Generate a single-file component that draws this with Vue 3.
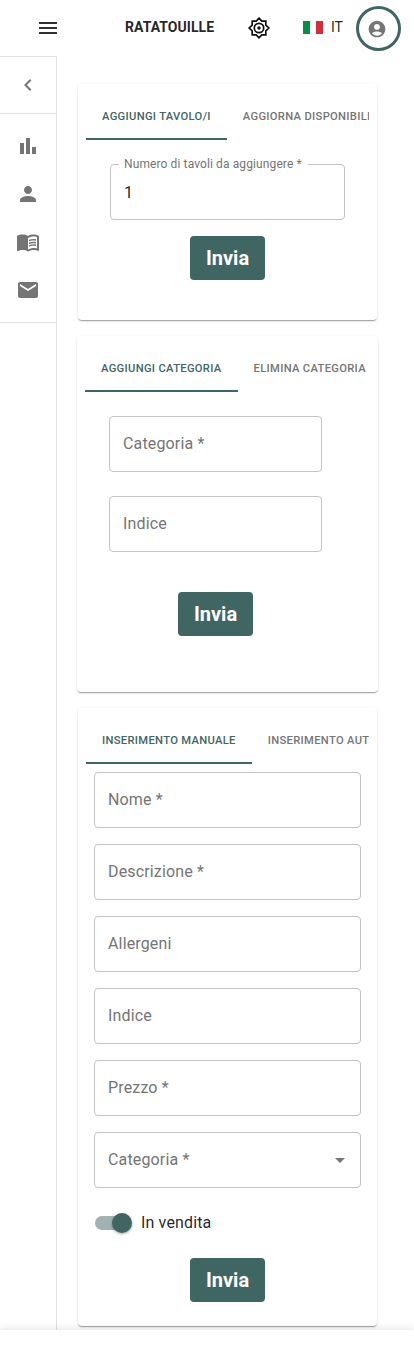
<script setup>
const navIcons = [
  'M4 9h4v11H4zm12 4h4v7h-4zm-6-9h4v16h-4z',
  'M12 12c2.21 0 4-1.79 4-4s-1.79-4-4-4-4 1.79-4 4 1.79 4 4 4zm0 2c-2.67 0-8 1.34-8 4v2h16v-2c0-2.66-5.33-4-8-4z',
  'M21 5c-1.11-.35-2.33-.5-3.5-.5-1.95 0-4.05.4-5.5 1.5-1.45-1.1-3.55-1.5-5.5-1.5S2.45 4.9 1 6v14.65c0 .25.25.5.5.5.1 0 .15-.05.25-.05C3.1 20.45 5.05 20 6.5 20c1.95 0 4.05.4 5.5 1.5 1.35-.85 3.8-1.5 5.5-1.5 1.65 0 3.35.3 4.75 1.05.1.05.15.05.25.05.25 0 .5-.25.5-.5V6c-.6-.45-1.25-.75-2-1zm0 13.5c-1.1-.35-2.3-.5-3.5-.5-1.7 0-4.15.65-5.5 1.5V8c1.35-.85 3.8-1.5 5.5-1.5 1.2 0 2.4.15 3.5.5v11.5z M17.5 10.5c.88 0 1.73.09 2.5.26V9.24c-.79-.15-1.64-.24-2.5-.24-1.7 0-3.24.29-4.5.83v1.66c1.13-.64 2.7-.99 4.5-.99zM13 12.49v1.66c1.13-.64 2.7-.99 4.5-.99.88 0 1.73.09 2.5.26V11.9c-.79-.15-1.64-.24-2.5-.24-1.7 0-3.24.3-4.5.83zm4.5 1.84c-1.7 0-3.24.29-4.5.83v1.66c1.13-.64 2.7-.99 4.5-.99.88 0 1.73.09 2.5.26v-1.52c-.79-.16-1.64-.24-2.5-.24z',
  'M20 4H4c-1.1 0-1.99.9-1.99 2L2 18c0 1.1.9 2 2 2h16c1.1 0 2-.9 2-2V6c0-1.1-.9-2-2-2zm0 4-8 5-8-5V6l8 5 8-5v2z'
]
const dishFields = ['Nome *', 'Descrizione *', 'Allergeni', 'Indice', 'Prezzo *']
</script>

<template>
  <div class="app">
    <header>
      <svg class="icon burger" viewBox="0 0 24 24"><path d="M3 18h18v-2H3v2zm0-5h18v-2H3v2zm0-7v2h18V6H3z" /></svg>
      <strong>RATATOUILLE</strong>
      <svg class="sun" viewBox="0 0 24 24">
        <path d="M12 2.2 14.8 5.2 18.8 5.2 18.8 9.2 21.8 12 18.8 14.8 18.8 18.8 14.8 18.8 12 21.8 9.2 18.8 5.2 18.8 5.2 14.8 2.2 12 5.2 9.2 5.2 5.2 9.2 5.2z" />
        <circle cx="12" cy="12" r="4.7" />
        <circle class="dot" cx="12" cy="12" r="1.7" />
      </svg>
      <div class="flag"><i class="green"></i><i class="red"></i></div>
      <span class="lang">IT</span>
      <div class="avatar">
        <svg viewBox="0 0 24 24"><path d="M12 2C6.48 2 2 6.48 2 12s4.48 10 10 10 10-4.48 10-10S17.52 2 12 2zm0 4c1.93 0 3.5 1.57 3.5 3.5S13.93 13 12 13s-3.5-1.57-3.5-3.5S10.07 6 12 6zm0 14c-2.03 0-4.43-.82-6.14-2.88C7.55 15.8 9.68 15 12 15s4.45.8 6.14 2.12C16.43 19.18 14.03 20 12 20z" /></svg>
      </div>
    </header>
    <div class="body">
      <aside>
        <div class="collapse"><svg class="icon" viewBox="0 0 24 24"><path d="M15.41 7.41 14 6l-6 6 6 6 1.41-1.41L10.83 12z" /></svg></div>
        <nav>
          <a v-for="(d, i) in navIcons" :key="i"><svg class="icon" viewBox="0 0 24 24"><path :d="d" /></svg></a>
        </nav>
      </aside>
      <main>
        <section class="card tables">
          <div class="tabs"><span class="tab on">AGGIUNGI TAVOLO/I</span><span class="tab">AGGIORNA DISPONIBILITÀ</span></div>
          <fieldset><legend>Numero di tavoli da aggiungere *</legend><span>1</span></fieldset>
          <button>Invia</button>
        </section>
        <section class="card category">
          <div class="tabs"><span class="tab on">AGGIUNGI CATEGORIA</span><span class="tab">ELIMINA CATEGORIA</span></div>
          <div class="field">Categoria *</div>
          <div class="field">Indice</div>
          <button>Invia</button>
        </section>
        <section class="card dish">
          <div class="tabs"><span class="tab on">INSERIMENTO MANUALE</span><span class="tab">INSERIMENTO AUTOMATICO</span></div>
          <div v-for="f in dishFields" :key="f" class="field">{{ f }}</div>
          <div class="field">Categoria *<svg class="icon" viewBox="0 0 24 24"><path d="m7 10 5 5 5-5z" /></svg></div>
          <div class="sale"><span class="switch"><i></i></span><span class="sale-label">In vendita</span></div>
          <button>Invia</button>
        </section>
      </main>
    </div>
    <footer></footer>
  </div>
</template>

<style>
body { background: #fff; }
</style>

<style scoped>
* { box-sizing: border-box; }
.app { width: 414px; height: 1350px; overflow: hidden; display: flex; flex-direction: column; font-family: Roboto, sans-serif; color: rgba(0, 0, 0, 0.87); }
svg { display: block; flex: none; }
.icon { width: 24px; height: 24px; fill: #757575; }
header { height: 56px; flex: none; display: flex; align-items: center; padding-left: 36px; }
.burger { fill: #332f30; }
strong { width: 91px; margin-left: 65px; font-size: 14px; line-height: 20px; font-weight: 700; letter-spacing: 0.06px; white-space: nowrap; margin-top: -2px; }
.sun { width: 24px; height: 24px; margin-left: 31px; fill: none; stroke: #111; stroke-width: 1.7; }
.sun .dot { fill: #111; stroke: none; }
.flag { width: 20px; height: 13px; margin: -1px 0 0 32px; display: flex; justify-content: space-between; background: #fff; }
.flag i { width: 7px; height: 13px; }
.green { background: #009246; }
.red { background: #d92b38; }
.lang { margin: -2px 0 0 8px; width: 12px; font-size: 14px; line-height: 20px; white-space: nowrap; }
.avatar { width: 45px; height: 45px; margin-left: 13px; border: 3px solid #406664; border-radius: 50%; display: flex; align-items: center; justify-content: center; flex: none; padding-right: 3px; padding-top: 2px; }
.avatar svg { width: 20px; height: 20px; fill: #757575; }
.body { flex: none; height: 1274px; display: flex; }
aside { width: 57px; height: 1274px; border: solid #e0e0e0; border-width: 1px 1px 0 0; }
.collapse { height: 57px; border-bottom: 1px solid #e0e0e0; display: flex; align-items: center; justify-content: center; }
nav { padding: 8px 0; border-bottom: 1px solid #e0e0e0; }
nav a { height: 48px; display: flex; align-items: center; justify-content: center; }
main { width: 357px; padding: 28px 36px 0 20px; display: flex; flex-direction: column; align-items: center; gap: 16px; }
.card { width: 299px; flex: none; padding: 8px; border-radius: 4px; box-shadow: 0 2px 1px -1px rgba(0, 0, 0, 0.2), 0 1px 1px rgba(0, 0, 0, 0.14), 0 1px 3px rgba(0, 0, 0, 0.12); }
.tables { height: 236px; }
.category { width: 301px; height: 356px; }
.dish { height: 618px; }
.tabs { height: 48px; display: flex; overflow: hidden; margin-bottom: 8px; }
.tab { padding: 17px 16px 0; height: 48px; font-size: 11.2px; line-height: 16px; font-weight: 500; letter-spacing: 0.32px; color: #757575; white-space: nowrap; flex: none; }
.on { color: #406664; border-bottom: 2px solid #406664; }
.field { height: 56px; border: 1px solid #c4c4c4; border-radius: 4px; padding: 0 8px 2px 13px; display: flex; align-items: center; justify-content: space-between; font-size: 16px; letter-spacing: 0.15px; color: #757575; }
.field .icon { margin-top: 2px; }
.tables .tabs { margin-bottom: 19px; }
fieldset { width: 235px; height: 61px; margin: 0 0 16px 24px; padding: 0 8px; border: 1px solid #c4c4c4; border-radius: 4px; font-size: 16px; }
legend { height: 11px; padding: 0 6px 0 5px; font-size: 12px; line-height: 11px; letter-spacing: 0.11px; color: #757575; }
fieldset span { display: block; padding: 13px 0 0 5px; line-height: 20px; }
button { display: block; width: 75px; height: 44px; margin: 0 auto; border: 0; padding: 0; border-radius: 4px; background: #406664; color: #fff; font: 700 20px/28px Roboto, sans-serif; }
.category .field { width: 213px; margin: 0 0 24px 24px; }
.category .tabs { margin-bottom: 24px; }
.category button { margin: 40px 0 0 93px; }
.dish .field { width: 267px; margin: 0 0 16px 8px; }
.sale { height: 38px; margin: 0 0 16px 9px; display: flex; align-items: center; font-size: 16px; letter-spacing: 0.15px; }
.sale-label { margin-top: -1px; }
.switch { width: 34px; height: 14px; border-radius: 7px; background: #a0b3b2; display: flex; align-items: center; justify-content: flex-end; margin-right: 12px; }
.switch i { width: 20px; height: 20px; flex: none; margin-right: -3px; border-radius: 50%; background: #406664; box-shadow: 0 1px 3px rgba(0, 0, 0, 0.35); }
footer { height: 20px; flex: none; background: #fff; position: relative; box-shadow: 0 0 10px rgba(0, 0, 0, 0.14); }
</style>
